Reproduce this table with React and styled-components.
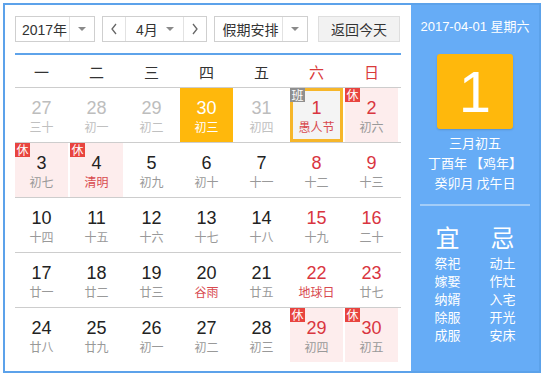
import styled, { createGlobalStyle } from 'styled-components';

const GlobalStyle = createGlobalStyle`
  html, body {
    margin: 0;
    padding: 0;
    background: #fff;
  }
  body {
    font-family: "Liberation Sans", "Noto Sans CJK SC", sans-serif;
  }
`;

const weekDays = ['一', '二', '三', '四', '五', '六', '日'];

// n: day number, l: lunar text, flags for how the cell is drawn
const rows = [
  [
    { n: 27, l: '三十', other: true },
    { n: 28, l: '初一', other: true },
    { n: 29, l: '初二', other: true },
    { n: 30, l: '初三', today: true },
    { n: 31, l: '初四', other: true },
    { n: 1, l: '愚人节', fest: true, weekend: true, selected: true, badge: '班' },
    { n: 2, l: '初六', weekend: true, rest: true, badge: '休' },
  ],
  [
    { n: 3, l: '初七', rest: true, badge: '休' },
    { n: 4, l: '清明', fest: true, rest: true, badge: '休' },
    { n: 5, l: '初九' },
    { n: 6, l: '初十' },
    { n: 7, l: '十一' },
    { n: 8, l: '十二', weekend: true },
    { n: 9, l: '十三', weekend: true },
  ],
  [
    { n: 10, l: '十四' },
    { n: 11, l: '十五' },
    { n: 12, l: '十六' },
    { n: 13, l: '十七' },
    { n: 14, l: '十八' },
    { n: 15, l: '十九', weekend: true },
    { n: 16, l: '二十', weekend: true },
  ],
  [
    { n: 17, l: '廿一' },
    { n: 18, l: '廿二' },
    { n: 19, l: '廿三' },
    { n: 20, l: '谷雨', fest: true },
    { n: 21, l: '廿五' },
    { n: 22, l: '地球日', fest: true, weekend: true },
    { n: 23, l: '廿七', weekend: true },
  ],
  [
    { n: 24, l: '廿八' },
    { n: 25, l: '廿九' },
    { n: 26, l: '初一' },
    { n: 27, l: '初二' },
    { n: 28, l: '初三' },
    { n: 29, l: '初四', weekend: true, rest: true, badge: '休' },
    { n: 30, l: '初五', weekend: true, rest: true, badge: '休' },
  ],
];

const yi = ['祭祀', '嫁娶', '纳婿', '除服', '成服'];
const ji = ['动土', '作灶', '入宅', '开光', '安床'];

const Chevron = ({ dir }) => (
  <svg width="8" height="12" viewBox="0 0 8 12">
    <polyline
      points={dir === 'left' ? '6,1 2,6 6,11' : '2,1 6,6 2,11'}
      fill="none"
      stroke="#666"
      strokeWidth="1.3"
    />
  </svg>
);

const App = () => {
  return (
    <>
      <GlobalStyle />
      <Calendar>
        <Main>
          <Toolbar>
            <Select $width={80}>
              <SelectLabel>2017年</SelectLabel>
              <ArrowCell><Caret /></ArrowCell>
            </Select>
            <Select $width={105}>
              <NavButton><Chevron dir="left" /></NavButton>
              <MonthCell>
                <span>4月</span>
                <Caret />
              </MonthCell>
              <NavButton $right><Chevron dir="right" /></NavButton>
            </Select>
            <Select $width={94}>
              <SelectLabel>假期安排</SelectLabel>
              <ArrowCell><Caret /></ArrowCell>
            </Select>
            <TodayButton>返回今天</TodayButton>
          </Toolbar>

          <WeekHeader>
            {weekDays.map((d, i) => (
              <WeekDay key={d} $weekend={i > 4}>{d}</WeekDay>
            ))}
          </WeekHeader>

          {rows.map((row, ri) => (
            <Row key={ri} $last={ri === rows.length - 1}>
              {row.map((c, ci) => (
                <Cell
                  key={ci}
                  $rest={c.rest}
                  $today={c.today}
                  $selected={c.selected}
                >
                  {c.badge && <Badge $work={c.badge === '班'}>{c.badge}</Badge>}
                  <DayNum $other={c.other} $weekend={c.weekend} $today={c.today}>
                    {c.n}
                  </DayNum>
                  <Lunar $other={c.other} $fest={c.fest} $today={c.today}>
                    {c.l}
                  </Lunar>
                </Cell>
              ))}
            </Row>
          ))}
        </Main>

        <Side>
          <DateLine>2017-04-01 星期六</DateLine>
          <BigDay>1</BigDay>
          <InfoLine>三月初五</InfoLine>
          <InfoLine>丁酉年 【鸡年】</InfoLine>
          <InfoLine>癸卯月 戊午日</InfoLine>
          <Divider />
          <Advice>
            <AdviceCol>
              <AdviceTitle>宜</AdviceTitle>
              {yi.map((t) => <AdviceItem key={t}>{t}</AdviceItem>)}
            </AdviceCol>
            <AdviceCol>
              <AdviceTitle>忌</AdviceTitle>
              {ji.map((t) => <AdviceItem key={t}>{t}</AdviceItem>)}
            </AdviceCol>
          </Advice>
        </Side>
      </Calendar>
    </>
  );
};

export default App;

// Styled Components
const Calendar = styled.div`
  margin: 3px;
  width: 534px;
  height: 366px;
  border: 2px solid #5ca2ea;
  display: flex;
  background: #fff;
`;

const Main = styled.div`
  width: 386px;
  padding: 11px 10px 0 10px;
`;

const Toolbar = styled.div`
  display: flex;
  align-items: center;
  gap: 7px;
  height: 26px;
  padding-bottom: 11px;
  border-bottom: 2px solid #5ea3ea;
`;

const Select = styled.div`
  display: flex;
  width: ${(p) => p.$width}px;
  height: 26px;
  box-sizing: border-box;
  border: 1px solid #cfcfcf;
  background: #fff;
  font-size: 14px;
  color: #333;
`;

const SelectLabel = styled.div`
  flex: 1;
  display: flex;
  align-items: center;
  justify-content: center;
  padding-left: 4px;
`;

const ArrowCell = styled.div`
  width: 24px;
  border-left: 1px solid #e2e2e2;
  display: flex;
  align-items: center;
  justify-content: center;
`;

const Caret = styled.span`
  width: 0;
  height: 0;
  border-left: 4px solid transparent;
  border-right: 4px solid transparent;
  border-top: 4px solid #8a8a8a;
`;

const NavButton = styled.div`
  width: 22px;
  display: flex;
  align-items: center;
  justify-content: center;
  border-left: ${(p) => (p.$right ? '1px solid #e2e2e2' : 'none')};
  border-right: ${(p) => (p.$right ? 'none' : '1px solid #e2e2e2')};
`;

const MonthCell = styled.div`
  flex: 1;
  display: flex;
  align-items: center;
  justify-content: space-between;
  padding: 0 9px 0 10px;
`;

const TodayButton = styled.div`
  margin-left: 3px;
  width: 82px;
  height: 26px;
  box-sizing: border-box;
  border: 1px solid #dedede;
  background: #f2f2f2;
  display: flex;
  align-items: center;
  justify-content: center;
  font-size: 14px;
  color: #333;
`;

const WeekHeader = styled.div`
  display: grid;
  grid-template-columns: repeat(7, 53px);
  column-gap: 2px;
  height: 32px;
  border-bottom: 1px solid #cdcdcd;
`;

const WeekDay = styled.div`
  display: flex;
  align-items: center;
  justify-content: center;
  font-size: 15px;
  color: ${(p) => (p.$weekend ? '#d93a3a' : '#333')};
`;

const Row = styled.div`
  display: grid;
  grid-template-columns: repeat(7, 53px);
  column-gap: 2px;
  height: 54px;
  border-bottom: ${(p) => (p.$last ? 'none' : '1px solid #cdcdcd')};
`;

const Cell = styled.div`
  position: relative;
  box-sizing: border-box;
  display: flex;
  flex-direction: column;
  align-items: center;
  padding-top: ${(p) => (p.$selected ? '7px' : '10px')};
  background: ${(p) =>
    p.$today ? '#ffb80c' : p.$selected ? '#f4f4f4' : p.$rest ? '#fdeded' : 'transparent'};
  border: ${(p) => (p.$selected ? '3px solid #f6b62a' : 'none')};
`;

const Badge = styled.span`
  position: absolute;
  top: ${(p) => (p.$work ? '-3px' : '0')};
  left: ${(p) => (p.$work ? '-3px' : '0')};
  width: 15px;
  height: 14px;
  display: flex;
  align-items: center;
  justify-content: center;
  font-size: 12px;
  line-height: 14px;
  color: #fff;
  background: ${(p) => (p.$work ? '#8f8f8f' : '#e8443f')};
  font-family: "Noto Sans CJK SC", sans-serif;
`;

const DayNum = styled.div`
  font-size: 18px;
  line-height: 20px;
  color: ${(p) =>
    p.$today ? '#fff' : p.$other ? '#bdbdbd' : p.$weekend ? '#d9353f' : '#222'};
`;

const Lunar = styled.div`
  font-size: 12px;
  line-height: 18px;
  font-family: "Noto Sans CJK SC", sans-serif;
  color: ${(p) =>
    p.$today ? '#fff' : p.$other ? '#c0c0c0' : p.$fest ? '#d84a4f' : '#999'};
`;

const Side = styled.div`
  flex: 1;
  background: #66acf6;
  color: #fff;
  display: flex;
  flex-direction: column;
  align-items: center;
  padding-top: 12px;
`;

const DateLine = styled.div`
  font-size: 13px;
  line-height: 20px;
`;

const BigDay = styled.div`
  margin-top: 17px;
  margin-bottom: 4px;
  width: 76px;
  height: 75px;
  border-radius: 3px;
  background: #ffb80c;
  box-shadow: 0 1px 2px rgba(0, 0, 0, 0.15);
  display: flex;
  align-items: center;
  justify-content: center;
  font-size: 58px;
  color: #fff;
`;

const InfoLine = styled.div`
  font-size: 13px;
  line-height: 20px;
  font-family: "Noto Sans CJK SC", sans-serif;
`;

const Divider = styled.div`
  margin-top: 11px;
  width: 110px;
  height: 2px;
  background: #a3cdf8;
`;

const Advice = styled.div`
  margin-top: 18px;
  display: flex;
  gap: 15px;
`;

const AdviceCol = styled.div`
  width: 40px;
  display: flex;
  flex-direction: column;
  align-items: center;
  font-family: "Noto Sans CJK SC", sans-serif;
`;

const AdviceTitle = styled.div`
  font-size: 24px;
  line-height: 26px;
  margin-bottom: 4px;
`;

const AdviceItem = styled.div`
  font-size: 13px;
  line-height: 18px;
`;
